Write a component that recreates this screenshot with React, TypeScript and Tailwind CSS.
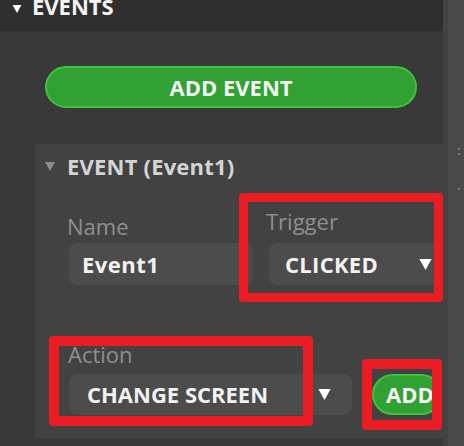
function Caret({ className = '' }: { className?: string }) {
  return (
    <svg viewBox="0 0 10 9" className={className} aria-hidden>
      <path d="M0 0 H10 L5 9 Z" fill="currentColor" />
    </svg>
  );
}

function Field({ value, className = '' }: { value: string; className?: string }) {
  return (
    <div
      className={`flex h-[42px] items-center rounded-[8px] bg-[#4c4c4c] text-[22px] font-bold leading-[21px] text-[#f2f2f2] ${className}`}
    >
      {value}
    </div>
  );
}

function Select({ value, className = '' }: { value: string; className?: string }) {
  return (
    <div
      className={`flex h-[41px] items-center justify-between rounded-[8px] bg-[#4c4c4c] text-[22px] font-bold leading-[21px] text-[#f2f2f2] ${className}`}
    >
      <span>{value}</span>
      <Caret className="h-[11px] w-[13px] shrink-0 text-white" />
    </div>
  );
}

export default function App() {
  return (
    <div className="flex h-[446px] w-[464px] overflow-hidden bg-[#393939] font-['Open_Sans',sans-serif]">
      <div className="relative flex w-[443px] shrink-0 flex-col overflow-hidden">
        {/* section header */}
        <div className="flex h-[31px] shrink-0 items-start bg-[#2f2f2f] pl-[12px]">
          <Caret className="mt-[5px] h-[8px] w-[10px] text-white" />
          <span className="-mt-[4px] ml-[10px] text-[22px] font-bold leading-[21px] text-[#f4f4f4]">
            EVENTS
          </span>
        </div>

        {/* add event */}
        <div className="ml-[45px] mt-[35px] flex h-[42px] w-[372px] shrink-0 items-center justify-center rounded-full border-2 border-[#3cc43c] bg-[#31a133]">
          <span className="text-[22px] font-bold leading-[21px] text-[#f4f4f4]">ADD EVENT</span>
        </div>

        {/* event panel */}
        <div className="ml-[35px] mt-[36px] w-[430px] shrink-0 bg-[#424242] pb-[23px] pl-[34px] pt-[12px]">
          <div className="-ml-[24px] flex h-[21px] items-center">
            <Caret className="h-[9px] w-[10px] text-[#8c8c8c]" />
            <span className="ml-[12px] text-[22px] font-bold leading-[21px] tracking-[0.2px] text-[#d4d4d4]">
              EVENT (Event1)
            </span>
          </div>

          <div className="mt-[34px] flex items-end gap-[16px]">
            <div className="flex w-[184px] flex-col">
              <span className="-ml-[2px] mb-[6px] text-[22px] leading-[21px] text-[#8f8f8f]">Name</span>
              <Field value="Event1" className="pl-[13px] tracking-[0.5px]" />
            </div>
            <div className="flex w-[176px] flex-col">
              <span className="-ml-[3px] mb-[11px] text-[22px] leading-[21px] text-[#8f8f8f]">Trigger</span>
              <Select value="CLICKED" className="h-[42px] pl-[16px] pr-[13px] tracking-[0.3px]" />
            </div>
          </div>

          <div className="mt-[59px] flex items-end gap-[20px]">
            <div className="flex w-[283px] flex-col">
              <span className="-ml-[1px] mb-[9px] text-[22px] leading-[21px] text-[#8f8f8f]">Action</span>
              <Select value="CHANGE SCREEN" className="pl-[18px] pr-[21px]" />
            </div>
            <div className="flex h-[41px] w-[70px] shrink-0 items-center rounded-full border-2 border-[#3cc43c] bg-[#31a133] pl-[12px]">
              <span className="text-[22px] font-bold leading-[21px] text-[#f4f4f4]">ADD</span>
            </div>
          </div>
        </div>

        {/* annotation boxes */}
        <div className="absolute left-[239px] top-[193px] h-[109px] w-[204px] rounded-[4px] border-[9px] border-[#ec1c24]" />
        <div className="absolute left-[49px] top-[336px] h-[90px] w-[264px] rounded-[4px] border-[10px] border-[#ec1c24]" />
        <div className="absolute left-[362px] top-[359px] h-[71px] w-[80px] rounded-[4px] border-[10px] border-[#ec1c24]" />
      </div>

      {/* splitter / scrollbar */}
      <div className="flex flex-1">
        <div className="w-[5px] bg-[#434343]" />
        <div className="relative flex-1 bg-[#4a4a4a]">
          <div className="absolute left-[10px] top-[148px] h-[2px] w-[2px] bg-[#7a7a7a]" />
          <div className="absolute left-[10px] top-[153px] h-[2px] w-[2px] bg-[#7a7a7a]" />
          <div className="absolute left-[10px] top-[188px] h-[2px] w-[2px] bg-[#7a7a7a]" />
        </div>
      </div>
    </div>
  );
}
